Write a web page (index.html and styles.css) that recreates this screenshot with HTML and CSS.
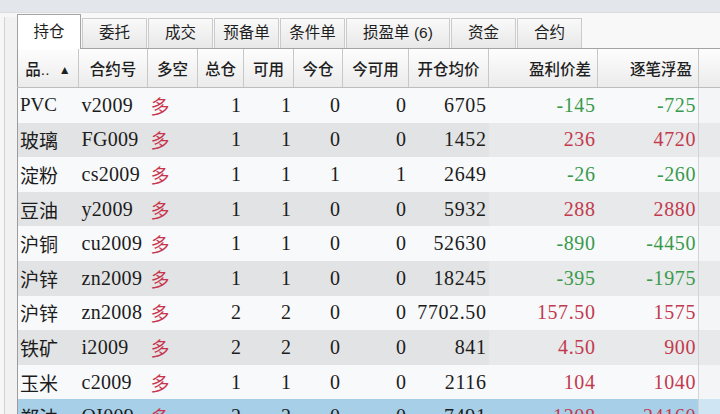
FILE: index.html
```html
<!DOCTYPE html>
<html lang="zh-CN">

<head>
  <meta charset="UTF-8">
  <title>持仓</title>
  <link rel="stylesheet" href="styles.css">
</head>

<body>
  <div class="topbar"></div>

  <div class="panel">
    <div class="gutter"></div>

    <div class="main">
      <div class="tabs">
        <div class="tab active">持仓</div>
        <div class="tab">委托</div>
        <div class="tab">成交</div>
        <div class="tab">预备单</div>
        <div class="tab">条件单</div>
        <div class="tab tab-wide">损盈单 (6)</div>
        <div class="tab">资金</div>
        <div class="tab">合约</div>
      </div>

      <table class="positions">
        <colgroup>
          <col class="c-name">
          <col class="c-code">
          <col class="c-side">
          <col class="c-total">
          <col class="c-avail">
          <col class="c-today">
          <col class="c-today-avail">
          <col class="c-price">
          <col class="c-diff">
          <col class="c-pnl">
          <col>
        </colgroup>
        <thead>
          <tr>
            <th>品.. <span class="sort">▲</span></th>
            <th>合约号</th>
            <th>多空</th>
            <th>总仓</th>
            <th>可用</th>
            <th>今仓</th>
            <th>今可用</th>
            <th>开仓均价</th>
            <th class="right">盈利价差</th>
            <th class="right">逐笔浮盈</th>
            <th class="filler"></th>
          </tr>
        </thead>
        <tbody>
          <tr>
            <td class="name">PVC</td><td class="code">v2009</td><td class="side">多</td>
            <td>1</td><td>1</td><td>0</td><td>0</td><td>6705</td>
            <td class="loss">-145</td><td class="loss">-725</td><td class="filler"></td>
          </tr>
          <tr>
            <td class="name">玻璃</td><td class="code">FG009</td><td class="side">多</td>
            <td>1</td><td>1</td><td>0</td><td>0</td><td>1452</td>
            <td class="gain">236</td><td class="gain">4720</td><td class="filler"></td>
          </tr>
          <tr>
            <td class="name">淀粉</td><td class="code">cs2009</td><td class="side">多</td>
            <td>1</td><td>1</td><td>1</td><td>1</td><td>2649</td>
            <td class="loss">-26</td><td class="loss">-260</td><td class="filler"></td>
          </tr>
          <tr>
            <td class="name">豆油</td><td class="code">y2009</td><td class="side">多</td>
            <td>1</td><td>1</td><td>0</td><td>0</td><td>5932</td>
            <td class="gain">288</td><td class="gain">2880</td><td class="filler"></td>
          </tr>
          <tr>
            <td class="name">沪铜</td><td class="code">cu2009</td><td class="side">多</td>
            <td>1</td><td>1</td><td>0</td><td>0</td><td>52630</td>
            <td class="loss">-890</td><td class="loss">-4450</td><td class="filler"></td>
          </tr>
          <tr>
            <td class="name">沪锌</td><td class="code">zn2009</td><td class="side">多</td>
            <td>1</td><td>1</td><td>0</td><td>0</td><td>18245</td>
            <td class="loss">-395</td><td class="loss">-1975</td><td class="filler"></td>
          </tr>
          <tr>
            <td class="name">沪锌</td><td class="code">zn2008</td><td class="side">多</td>
            <td>2</td><td>2</td><td>0</td><td>0</td><td>7702.50</td>
            <td class="gain">157.50</td><td class="gain">1575</td><td class="filler"></td>
          </tr>
          <tr>
            <td class="name">铁矿</td><td class="code">i2009</td><td class="side">多</td>
            <td>2</td><td>2</td><td>0</td><td>0</td><td>841</td>
            <td class="gain">4.50</td><td class="gain">900</td><td class="filler"></td>
          </tr>
          <tr>
            <td class="name">玉米</td><td class="code">c2009</td><td class="side">多</td>
            <td>1</td><td>1</td><td>0</td><td>0</td><td>2116</td>
            <td class="gain">104</td><td class="gain">1040</td><td class="filler"></td>
          </tr>
          <tr class="selected">
            <td class="name">郑油</td><td class="code">OI009</td><td class="side">多</td>
            <td>2</td><td>2</td><td>0</td><td>0</td><td>7491</td>
            <td class="gain">1208</td><td class="gain">24160</td><td class="filler"></td>
          </tr>
        </tbody>
      </table>
    </div>
  </div>
</body>

</html>
```

FILE: styles.css
```css
body {
  margin: 0;
  width: 720px;
  height: 414px;
  overflow: hidden;
  background: #f6f6f6;
  font-family: 'Liberation Serif', 'Noto Sans CJK SC', serif;
  color: #1c1c1c;
}

.topbar {
  height: 12px;
  background: #e3e7ec;
  border-bottom: 1px solid #d9dde2;
}

.panel {
  display: flex;
}

.gutter {
  width: 12px;
  margin-left: 4px;
  margin-top: 4px;
  border-left: 1px solid #d2d2d2;
  background: #f1f1f1;
}

.main {
  flex: 1;
}

/* tab strip */
.tabs {
  display: flex;
  align-items: flex-end;
  height: 35px;
  border-bottom: 1px solid #a4a4a4;
  background: #f8f8f8;
}

.tab {
  width: 65px;
  height: 30px;
  margin-right: 1px;
  box-sizing: border-box;
  border: 1px solid #cbcbcb;
  border-bottom: none;
  background: linear-gradient(#f9f9f9, #e8e8e8);
  font-family: 'Liberation Sans', 'Noto Sans CJK SC', sans-serif;
  font-size: 15.5px;
  line-height: 28px;
  text-align: center;
  color: #1e1e1e;
}

.tab.active {
  width: 64px;
  height: 35px;
  line-height: 33px;
  margin-bottom: -1px;
  background: #fff;
  border-color: #a4a4a4;
}

.tab-wide {
  width: 104px;
}

/* positions grid */
.positions {
  border-collapse: collapse;
  table-layout: fixed;
  width: 703px;
  border-left: 1px solid #9c9c9c;
}

.c-name { width: 61px; }
.c-code { width: 69px; }
.c-side { width: 50px; }
.c-total { width: 46px; }
.c-avail { width: 50px; }
.c-today { width: 49px; }
.c-today-avail { width: 66px; }
.c-price { width: 80px; }
.c-diff { width: 109px; }
.c-pnl { width: 101px; }

.positions th {
  height: 38px;
  padding: 0;
  background: linear-gradient(#fdfdfd, #ebebeb);
  border-right: 1px solid #c8c8c8;
  border-bottom: 1px solid #bdbdbd;
  font-family: 'Liberation Sans', 'Noto Sans CJK SC', sans-serif;
  font-size: 15.5px;
  font-weight: 500;
  color: #1e1e1e;
  text-align: center;
  white-space: nowrap;
}

.positions th.right {
  text-align: right;
  padding-right: 6px;
}

.sort {
  font-size: 12px;
  margin-left: 5px;
  vertical-align: 1px;
}

.positions td {
  height: 34.6px;
  padding: 0 2px 0 0;
  font-size: 20px;
  letter-spacing: 0.6px;
  text-align: right;
  white-space: nowrap;
  overflow: hidden;
}

.positions td.name,
.positions td.code,
.positions td.side {
  text-align: left;
  padding: 0 0 0 3px;
}

.positions td.code {
  letter-spacing: 0.3px;
}

.positions td.name {
  letter-spacing: 0;
  padding-left: 2px;
  font-size: 19px;
}

.positions td.side {
  color: #c8344c;
  letter-spacing: 0;
  font-size: 19px;
}

.loss { color: #3a9a4c; }
.gain { color: #c23a4e; }

.positions tbody tr:nth-child(odd) { background: #f8f9fb; }
.positions tbody tr:nth-child(even) { background: #e2e3e4; }
.positions tbody tr:nth-child(even) td:nth-child(n+9) { background: #e8e9ea; }

.positions tbody tr.selected,
.positions tbody tr.selected td:nth-child(n+9) {
  background: #a7cfe8;
}

.positions th.filler {
  border-right: none;
  border-left: 1px solid #d0d0d0;
}

.positions tbody tr td.filler {
  background: #f3f5f7;
  border-left: 1px solid #d4d4d4;
}

.positions tbody tr.selected td.filler {
  background: #cfe5f3;
}
```
